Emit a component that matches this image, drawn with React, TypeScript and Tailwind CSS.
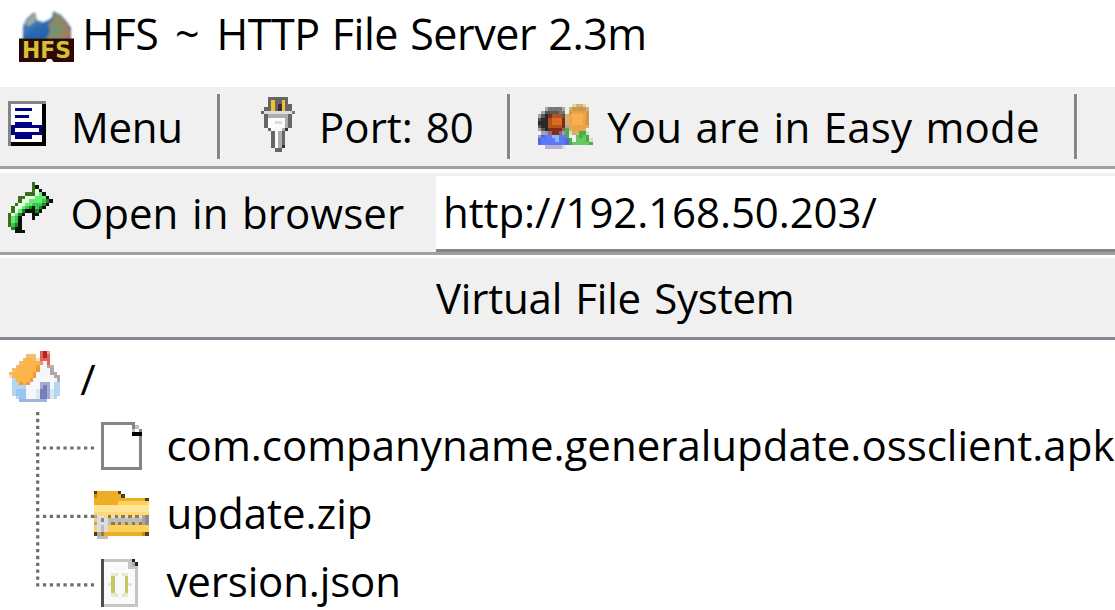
import React from "react";

const U = 3.43;

type Palette = Record<string, string>;

function Pixels({ rows, palette, className = "" }: { rows: string[]; palette: Palette; className?: string }) {
  const w = Math.max(...rows.map((r) => r.length));
  return (
    <svg
      width={w * U}
      height={rows.length * U}
      viewBox={`0 0 ${w} ${rows.length}`}
      shapeRendering="crispEdges"
      className={`block shrink-0 ${className}`}
      aria-hidden="true"
    >
      {rows.flatMap((row, y) =>
        [...row].map((c, x) =>
          palette[c] ? <rect key={`${x}-${y}`} x={x} y={y} width={1} height={1} fill={palette[c]} /> : null,
        ),
      )}
    </svg>
  );
}

const menuIcon = [
  "ggggggggggg",
  "gwwwwwwwwwk",
  "gwbbbbbwwwk",
  "gwwwwwwwwwk",
  "gwbbbbwwwwk",
  "gwwwwwwwwwk",
  "gwbbbbbwwwk",
  "gbbbbbbbbbk",
  "gbwwwwwwwbk",
  "gbbbbbbbbbk",
  "gwbbbbbwwwk",
  "gwwwwwwwwwk",
  "gkkkkkkkkkk",
];
const menuPalette = { g: "#848484", w: "#ffffff", b: "#000084", k: "#000000" };

const plugIcon = [
  "..dddddd..",
  "..dyddyd..",
  "..dydkydd.",
  ".ddydkydd.",
  "dllllllllD",
  ".dggggggd.",
  ".dwwwwwgd.",
  ".dwwllwgd.",
  ".dwwwwwgd.",
  "..dwwwgk..",
  "...dwgd...",
  "...dwgd...",
  "...dwgd...",
  "...dwgd...",
  "...dwgk...",
  "....dd....",
];
const plugPalette = { d: "#666666", D: "#777777", y: "#f3c032", k: "#333333", l: "#dcdcdc", g: "#adadad", w: "#fbfbfb" };

const peopleIcon = [
  "..........EttE..",
  "..hggggh.tTTTTt.",
  ".hGGGGgg.TooooT.",
  "hGkrmmmGtoOOOoT.",
  "GkkmnnnrtoOOOoT.",
  "kkkmnnnrtoOOOoT.",
  "Gkkmmmmrhooooot.",
  "hGkrrrrHvtooot..",
  ".huHrrHuvettvve.",
  "ubBBccBBvwwVvVv.",
  "bBBBBcBBbvwVVVve",
  "bBBBBBBBbvVVVVVv",
  "..pppppe........",
];
const peoplePalette = {
  e: "#d8dfc8", E: "#e4d3b0", t: "#d6b078", T: "#cb9849", o: "#eda246", O: "#f8b052", h: "#a7a7a7", H: "#a0635a",
  g: "#777777", G: "#5a5857", k: "#2d2828", m: "#b4531c", n: "#d86c24", r: "#802b17", b: "#5269dc", B: "#5f78fa",
  c: "#83baf8", u: "#8f9be0", v: "#4cae42", V: "#66c764", w: "#e9f6e7", p: "#b9b0cf",
};

const arrowIcon = [
  ".......G.....",
  ".......GK....",
  ".......GWK...",
  ".....GGGWLK..",
  "...GGWWWLLLK.",
  "...GWWLLLLMDK",
  "..GWWLLMMMDK.",
  ".GWWLMDKMDK..",
  ".GWLDKKKDK...",
  "GWLDK..KK....",
  "GLMK...K.....",
  "GLMK.........",
  "GMDK.........",
  ".DKK.........",
  "..KKK........",
];
const arrowPalette = { G: "#39711a", K: "#0b140b", W: "#e8ffe4", L: "#63ed70", M: "#37c84c", D: "#23802a" };

const houseIcon = [
  ".........rRs...",
  ".....aaa.rRr...",
  "....aooaPrrr...",
  "...aooooodwr...",
  "..aooooodwwcs..",
  ".aoooooodwwwc..",
  "aoooooodwwwwcc.",
  "eoooooodwwwwwcc",
  ".boooodwwwwwwwc",
  ".bbdodwwwfffwbb",
  ".bbbbwwwwfDfwbb",
  ".bBBBwwwvDDfvbb",
  ".bBBBwwwvDDfvbb",
  "..bBBwwwvDDfvb.",
  "...uuuuuuuu....",
];
const housePalette = {
  r: "#df6557", R: "#b91e20", s: "#d9a79f", a: "#f2bd70", o: "#fbb448", d: "#ec9a3f", P: "#f0ddd5", c: "#b4a4a8",
  e: "#f2dfc4", w: "#f5f7fb", b: "#b4d5ee", B: "#98c5f1", f: "#a2acd2", D: "#7580b7", v: "#dce8f1", u: "#9bb5df",
};

const fileIcon = [
  "gggggggggg..",
  "gwwwwwwwwgl.",
  "gwwwwwwwwlwg",
  "gwwwwwwwwkkk",
  ...Array(9).fill("gwwwwwwwwwwg"),
  "gggggggggggg",
];
const filePalette = { g: "#858585", l: "#c0c0c0", w: "#ffffff", k: "#000000" };

const zipIcon = [
  "kooooook........",
  "Doooooook.......",
  "oooooooooooooook",
  "oooooooYYYYYYYYY",
  "PPPPPPPPPPPPPPPP",
  "PPPPPPPPPPPPPPPP",
  "QQQQQQQQQQQQQQQQ",
  "gllQblblblblblgd",
  "YldlssssssssssGd",
  "glllsbsbsbsbsbgd",
  "YlslYYYYYYYYYYYY",
  "YlslYYYYYYYYYYYY",
  "kgboooooooooooDk",
  ".sss............",
];
const zipPalette = {
  k: "#51400f", D: "#c58a19", o: "#edae25", Y: "#fbd05b", P: "#ffe397", Q: "#fdd977", g: "#a8a8a0", l: "#dedede",
  b: "#a17b23", d: "#8a8a8a", s: "#bcbcbc", G: "#a5a5a5",
};

const jsonIcon = [
  "dllllllllk.",
  "dwwwwwwwlgk",
  "dwwwwwwwlll",
  "dwwwwwwwwwl",
  "dwwfewefwwl",
  "dwwywwwywwl",
  "dwwywwwywwl",
  "dweywwwyewl",
  "dwwywwwywwl",
  "dwwywwwywwl",
  "dwwfewefwwl",
  "dwwwwwwwwwl",
  "dwwwwwwwwwl",
  "dllllllllll",
];
const jsonPalette = { d: "#4d4d4d", l: "#c4c5c8", g: "#a8a8a8", k: "#262626", w: "#f8fafc", y: "#c3c763", e: "#e6e9c4", f: "#e9ebd2" };

function HfsLogo() {
  return (
    <svg width="56" height="54" viewBox="0 0 56 54" className="block shrink-0" aria-hidden="true">
      <defs>
        <linearGradient id="sea" x1="0" y1="0" x2="1" y2="1">
          <stop offset="0" stopColor="#7399b8" />
          <stop offset="0.5" stopColor="#2767b2" />
          <stop offset="1" stopColor="#265b99" />
        </linearGradient>
        <filter id="soft" x="-10%" y="-10%" width="120%" height="120%">
          <feGaussianBlur stdDeviation="1" />
        </filter>
      </defs>
      <g filter="url(#soft)">
        <path d="M4 30V16L8 8l6-5 8-2h12l8 4 6 7 4 6v12z" fill="url(#sea)" />
        <path d="M27 30l4-9-2-7 5-4 2-8 6 4 6 7 3 7v10z" fill="#8a8b63" />
        <path d="M43 9l5 5 4 9-1 7h-5l1-10z" fill="#a17a62" />
        <path d="M34 14l6 3-2 7-4 5-2-6z" fill="#71917c" />
        <path d="M6 14l5-7 7-4-2 9-6 4z" fill="#9ba8a1" />
        <path d="M16 0l1 5 1 5 6 2 5-2 4-3 1-7z" fill="#fff" />
      </g>
      <path d="M0 28.5h55V52H34.5l-2-3h-4l-2 3H0z" fill="#2c0806" />
      <text
        x="3"
        y="48.2"
        textLength="49"
        lengthAdjust="spacingAndGlyphs"
        fontFamily="DejaVu Sans"
        fontWeight="700"
        fontSize="22.5"
        fill="#d3c034"
      >
        HFS
      </text>
    </svg>
  );
}

function Separator() {
  return <div className="h-[65px] w-[4px] shrink-0 border-r border-[#fafafa] bg-[#858585]" />;
}

function TreeLines() {
  const dots = { stroke: "#6d6d6d", strokeWidth: 3.2, strokeDasharray: "3.3 3.55" };
  return (
    <svg width="94" height="198" viewBox="0 0 94 198" className="block shrink-0" aria-hidden="true">
      <path d="M37.7 0V174.5" fill="none" {...dots} />
      <path d="M42.9 36H94M42.9 104.3H94M42.9 172.8H94" fill="none" {...dots} />
    </svg>
  );
}

const entries = [
  { name: "com.companyname.generalupdate.ossclient.apk", icon: fileIcon, palette: filePalette, pad: "pl-[6.7px]", track: "tracking-[0px]" },
  { name: "update.zip", icon: zipIcon, palette: zipPalette, pad: "pl-0", track: "tracking-[0px]" },
  { name: "version.json", icon: jsonIcon, palette: jsonPalette, pad: "pl-[6.7px]", track: "tracking-[-0.15px]" },
];

export default function App() {
  return (
    <div className="flex h-[610px] w-[1115px] flex-col overflow-hidden whitespace-nowrap bg-white font-['Open_Sans','Noto_Sans',sans-serif] text-[42px] leading-[60px] text-black">
      <header className="flex h-[87px] shrink-0 items-start pl-[18.7px] pt-[9.5px]">
        <HfsLogo />
        <h1 className="-mt-[6px] ml-[7.5px] text-[43px] font-normal leading-[60px] tracking-[-0.45px] [word-spacing:1.5px]">
          HFS <span className="ml-[4.5px] mr-[5px]">~</span> HTTP File Server 2.3m
        </h1>
      </header>

      <div className="flex h-[82px] shrink-0 items-start border-b-[3px] border-[#a0a0a0] bg-[#f0f0f0] pt-[7px]">
        <button className="flex w-[217px] shrink-0 items-start pl-[8.3px]">
          <Pixels rows={menuIcon} palette={menuPalette} className="mt-[7px]" />
          <span className="ml-[25px] mt-[3px] tracking-[-0.3px]">Menu</span>
        </button>
        <Separator />
        <button className="flex w-[286px] shrink-0 items-start pl-[40.3px]">
          <Pixels rows={plugIcon} palette={plugPalette} className="mt-[3.3px]" />
          <span className="ml-[23.5px] mt-[3px] tracking-[0px] [word-spacing:2px]">Port: 80</span>
        </button>
        <Separator />
        <button className="flex w-[563px] shrink-0 items-start pl-[27.3px]">
          <Pixels rows={peopleIcon} palette={peoplePalette} className="mt-[10.3px]" />
          <span className="ml-[14px] mt-[3px] tracking-[0.2px] [word-spacing:2.2px]">You are in Easy mode</span>
        </button>
        <Separator />
      </div>

      <div className="flex h-[86px] shrink-0 items-start border-b-[3px] border-t-4 border-b-[#a0a0a0] border-t-white bg-[#f0f0f0]">
        <button className="flex w-[435.5px] shrink-0 items-start pl-[8.3px] pt-[9.3px]">
          <Pixels rows={arrowIcon} palette={arrowPalette} />
          <span className="ml-[17.5px] mt-[1px] tracking-[0.1px] [word-spacing:2.5px]">Open in browser</span>
        </button>
        <div className="mt-[3px] h-[76px] grow border-b-[3px] border-[#858585] bg-white pl-[7.5px] pt-[6px]">
          <span className="tracking-[-0.1px]">http://192.168.50.203/</span>
        </div>
      </div>

      <div className="h-[85px] shrink-0 border-b-[3px] border-t-[3px] border-b-[#828790] border-t-white bg-[#f0f0f0] pl-[436px] pt-[10px]">
        <span className="tracking-[-0.2px] [word-spacing:2.5px]">Virtual File System</span>
      </div>

      <main className="shrink-0">
        <div className="flex h-[72px] items-start pl-[8.8px] pt-[10.7px]">
          <Pixels rows={houseIcon} palette={housePalette} />
          <span className="-mt-[2px] ml-[20px]">/</span>
        </div>
        <div className="flex items-start">
          <TreeLines />
          <ul>
            {entries.map((e) => (
              <li key={e.name} className="flex h-[68.4px] items-center">
                <div className={`w-[72.5px] shrink-0 ${e.pad}`}>
                  <Pixels rows={e.icon} palette={e.palette} />
                </div>
                <span className={`-mt-[3px] ${e.track}`}>{e.name}</span>
              </li>
            ))}
          </ul>
        </div>
      </main>
    </div>
  );
}
